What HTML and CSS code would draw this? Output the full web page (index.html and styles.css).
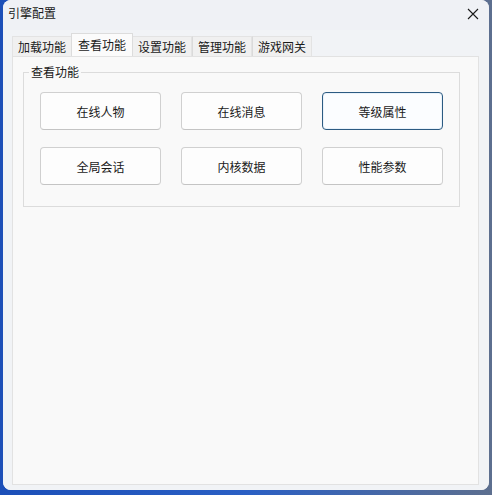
FILE: index.html
```html
<!DOCTYPE html>
<html lang="zh">
<head>
<meta charset="utf-8">
<title>引擎配置</title>
<link rel="stylesheet" href="styles.css">
</head>
<body>
<div class="window">
  <div class="titlebar">
    <span class="title">引擎配置</span>
    <span class="close">
      <svg width="12" height="12" viewBox="0 0 12 12"><path d="M1 1L11 11M11 1L1 11" stroke="#1a1a1a" stroke-width="1.1" fill="none"/></svg>
    </span>
  </div>
  <div class="client">
    <div class="tabs">
      <div class="tab">加载功能</div>
      <div class="tab active">查看功能</div>
      <div class="tab">设置功能</div>
      <div class="tab">管理功能</div>
      <div class="tab">游戏网关</div>
    </div>
    <div class="panel">
      <fieldset class="group">
        <legend class="legend">查看功能</legend>
        <div class="grid">
          <button class="btn">在线人物</button>
          <button class="btn">在线消息</button>
          <button class="btn focus">等级属性</button>
          <button class="btn">全局会话</button>
          <button class="btn">内核数据</button>
          <button class="btn">性能参数</button>
        </div>
      </fieldset>
    </div>
  </div>
</div>
</body>
</html>
```
FILE: styles.css
```css
html, body {
  margin: 0;
  padding: 0;
}
body {
  width: 492px;
  height: 495px;
  overflow: hidden;
  background: linear-gradient(90deg, #1c4fb8 0%, #2a5fc4 50%, #5d6f8f 100%);
  font-family: "Microsoft YaHei", "Noto Sans CJK SC", "Noto Sans", sans-serif;
  color: #1a1a1a;
}
.window {
  margin-left: 3px;
  width: 486px;
  height: 490px;
  border-radius: 8px;
  background: #f9f9f9;
  overflow: hidden;
  display: flex;
  flex-direction: column;
  box-shadow: inset -9px 0 6px -6px rgba(0,0,0,0.08);
}
.titlebar {
  height: 30px;
  flex: none;
  display: flex;
  align-items: center;
  justify-content: space-between;
  padding: 0 10px 4px 5px;
  box-sizing: border-box;
  background: #eff1f5;
}
.title {
  font-size: 12px;
  line-height: 16px;
}
.close {
  display: flex;
  width: 12px;
  height: 12px;
  margin-top: 2px;
}
.client {
  flex: 1;
  display: flex;
  flex-direction: column;
  padding: 3px 10px 5px 9px;
  background: #f1f3f6;
}
.tabs {
  display: flex;
  align-items: flex-end;
  height: 23px;
}
.tab {
  width: 60px;
  height: 20px;
  box-sizing: border-box;
  padding: 1px 0 0 5px;
  font-size: 12px;
  line-height: 18px;
  white-space: nowrap;
  background: #f0f0f0;
  border: 1px solid #e3e3e3;
  border-bottom: none;
  position: relative;
}
.tab + .tab {
  border-left-color: #dadada;
}
.tab.active {
  height: 23px;
  width: 62px;
  margin: 0 -1px;
  padding: 2px 0 0 6px;
  background: #fbfbfb;
  border-color: #dcdcdc;
  z-index: 1;
}
.panel {
  flex: 1;
  background: #f9f9f9;
  border: 1px solid #e2e2e2;
  padding: 7px 0 0 10px;
}
.group {
  margin: 0;
  width: 437px;
  box-sizing: border-box;
  border: 1px solid #dcdcdc;
  padding: 12px 0 21px 16px;
}
.legend {
  font-size: 12px;
  line-height: 16px;
  padding: 0 2px;
  margin-left: -11px;
}
.grid {
  display: grid;
  grid-template-columns: repeat(3, 121px);
  grid-auto-rows: 38px;
  column-gap: 20px;
  row-gap: 17px;
}
.btn {
  font-family: inherit;
  font-size: 12px;
  color: #1a1a1a;
  background: #fdfdfd;
  border: 1px solid #d0d0d0;
  border-bottom-color: #c4c4c4;
  border-radius: 4px;
  padding: 0;
}
.btn.focus {
  border: 1px solid #2c5b82;
  background: #fbfdff;
  box-shadow: inset 0 0 0 1px #e9f2fa;
}
```
